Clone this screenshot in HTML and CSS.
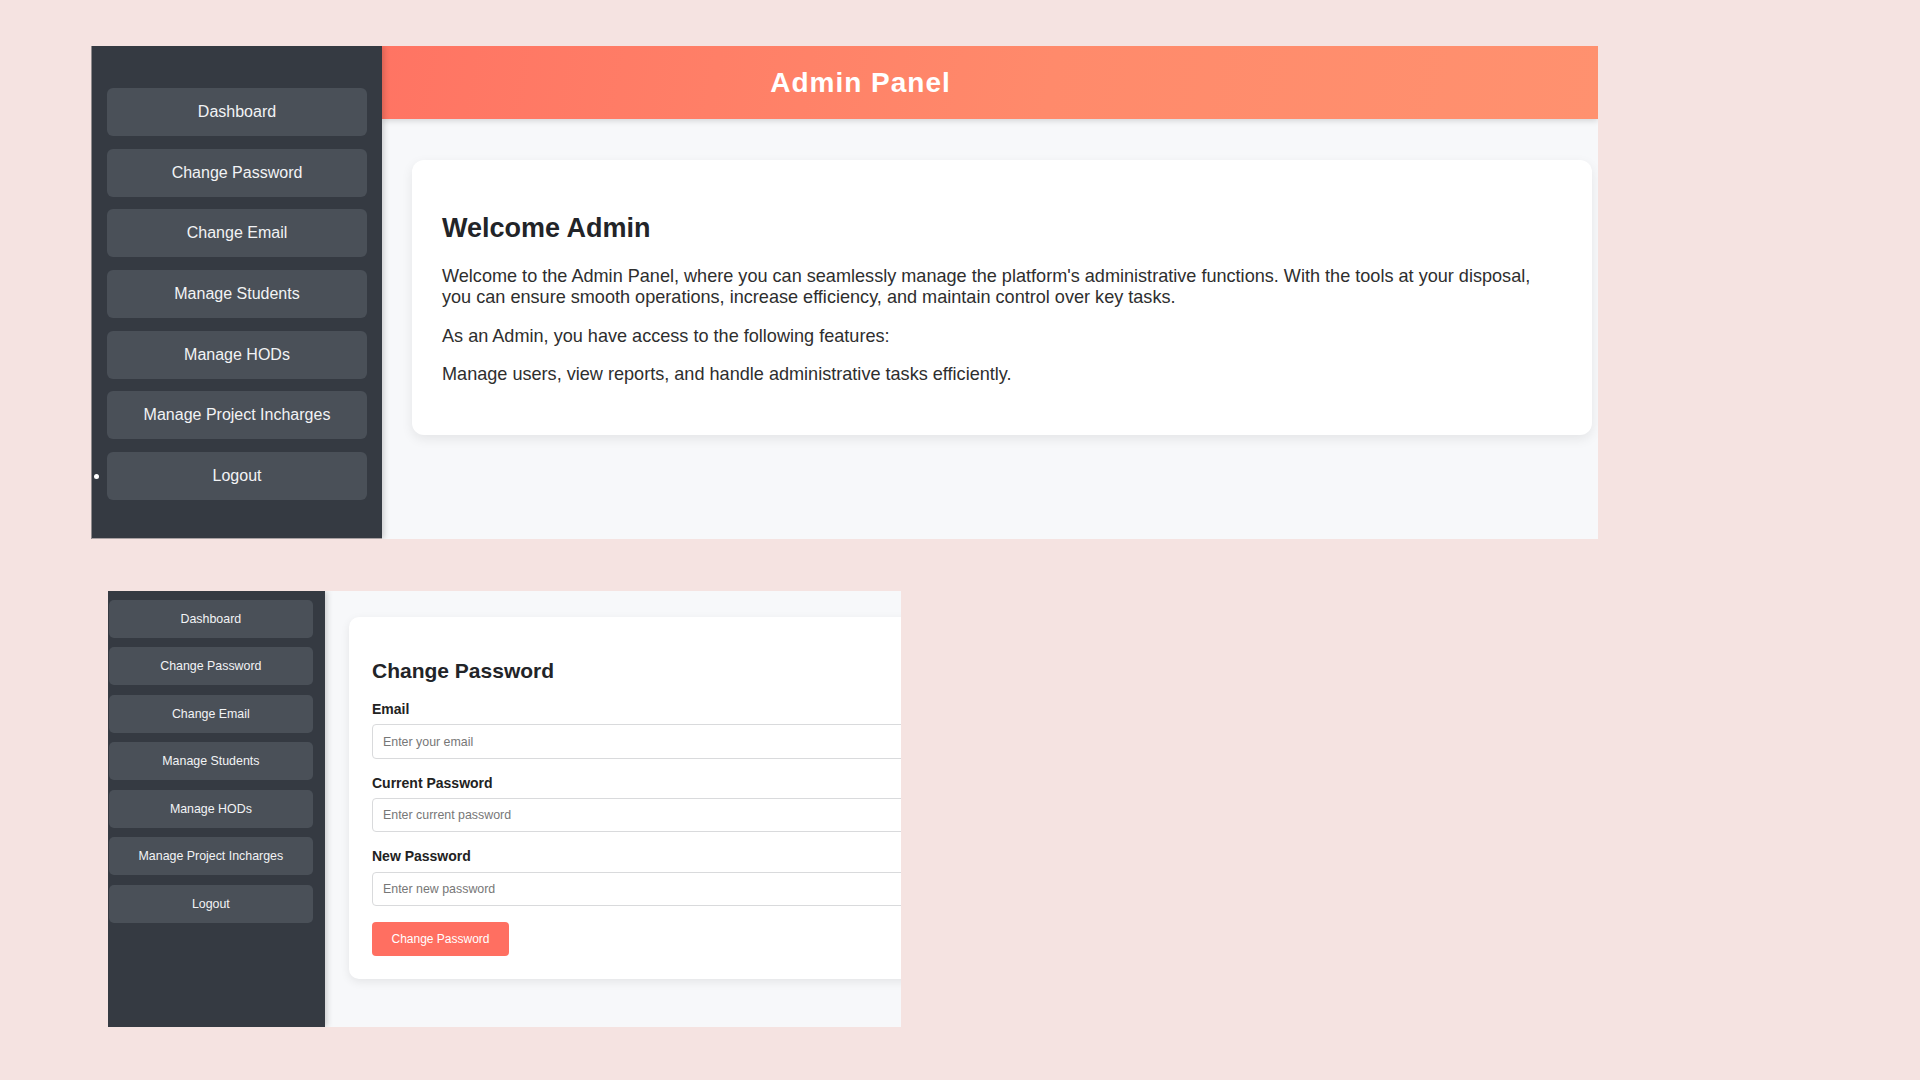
FILE: index.html
```html
<!DOCTYPE html>
<html lang="en">
<head>
<meta charset="utf-8">
<title>Admin Panel</title>
<link rel="stylesheet" href="styles.css">
</head>
<body>
<div class="page">
  <section class="shot shot-dashboard">
    <nav class="sidebar">
      <a class="nav-btn">Dashboard</a>
      <a class="nav-btn">Change Password</a>
      <a class="nav-btn">Change Email</a>
      <a class="nav-btn">Manage Students</a>
      <a class="nav-btn">Manage HODs</a>
      <a class="nav-btn">Manage Project Incharges</a>
      <a class="nav-btn nav-bullet">Logout</a>
    </nav>
    <div class="main">
      <header class="topbar"><h1>Admin Panel</h1></header>
      <div class="content">
        <div class="card">
          <h2>Welcome Admin</h2>
          <p>Welcome to the Admin Panel, where you can seamlessly manage the platform's administrative functions. With the tools at your disposal, you can ensure smooth operations, increase efficiency, and maintain control over key tasks.</p>
          <p>As an Admin, you have access to the following features:</p>
          <p>Manage users, view reports, and handle administrative tasks efficiently.</p>
        </div>
      </div>
    </div>
  </section>

  <section class="shot shot-password">
    <nav class="sidebar sidebar-sm">
      <a class="nav-btn">Dashboard</a>
      <a class="nav-btn">Change Password</a>
      <a class="nav-btn">Change Email</a>
      <a class="nav-btn">Manage Students</a>
      <a class="nav-btn">Manage HODs</a>
      <a class="nav-btn">Manage Project Incharges</a>
      <a class="nav-btn">Logout</a>
    </nav>
    <div class="main main-sm">
      <div class="form-card">
        <h2>Change Password</h2>
        <label class="field-label">Email</label>
        <input class="field-input" type="text" placeholder="Enter your email">
        <label class="field-label">Current Password</label>
        <input class="field-input" type="password" placeholder="Enter current password">
        <label class="field-label">New Password</label>
        <input class="field-input" type="password" placeholder="Enter new password">
        <button class="submit-btn">Change Password</button>
      </div>
    </div>
  </section>
</div>
</body>
</html>
```

FILE: styles.css
```css
* { box-sizing: border-box; }

html, body {
  margin: 0;
  padding: 0;
  background: #f5e3e1;
  font-family: "Liberation Sans", Arial, sans-serif;
  width: 1920px;
  height: 1080px;
  overflow: hidden;
}

.page {
  display: flex;
  flex-direction: column;
  align-items: flex-start;
  padding-top: 46px;
}

.shot {
  display: flex;
  overflow: hidden;
}

/* ---------- first screenshot ---------- */
.shot-dashboard {
  margin-left: 91px;
  width: 1507px;
  height: 493px;
  border-left: 1px solid #8f8a8c;
}

.sidebar {
  position: relative;
  z-index: 2;
  flex: 0 0 290px;
  background: #353a42;
  display: flex;
  flex-direction: column;
  gap: 12.7px;
  padding: 42px 15px 0 15px;
  box-shadow: 2px 0 6px rgba(0, 0, 0, 0.18);
  border-bottom: 1px solid #a9a1a3;
}

.nav-btn {
  display: flex;
  align-items: center;
  justify-content: center;
  height: 48px;
  flex: 0 0 auto;
  background: #4a5058;
  border-radius: 6px;
  color: #f2f3f5;
  font-size: 16px;
  text-decoration: none;
}

.nav-bullet { position: relative; }
.nav-bullet::before {
  content: "";
  position: absolute;
  left: -13px;
  top: 22px;
  width: 5px;
  height: 5px;
  border-radius: 50%;
  background: #ffffff;
}

.main {
  flex: 1;
  display: flex;
  flex-direction: column;
  background: #f7f8fa;
  min-width: 0;
}

.topbar {
  position: relative;
  z-index: 1;
  height: 73px;
  flex: 0 0 73px;
  display: flex;
  align-items: center;
  justify-content: center;
  padding-right: 259px;
  background: linear-gradient(100deg, #ff7463 0%, #ff8a6b 55%, #ff916f 100%);
  box-shadow: 0 2px 6px rgba(0, 0, 0, 0.14);
}

.topbar h1 {
  margin: 0;
  color: #ffffff;
  font-size: 28px;
  font-weight: 700;
  letter-spacing: 1px;
}

.content {
  padding: 41px 6px 0 30px;
}

.card {
  background: #ffffff;
  border-radius: 12px;
  padding: 30px 30px 31.5px;
  box-shadow: 0 4px 12px rgba(0, 0, 0, 0.08);
  color: #2e2e2e;
}

.card h2 {
  margin: 23px 0 22px;
  font-size: 27px;
  font-weight: 700;
  color: #222428;
}

.card p {
  margin: 18px 0;
  max-width: 1100px;
  font-size: 18.1px;
  line-height: 20.8px;
}

/* ---------- second screenshot ---------- */
.shot-password {
  margin-top: 52px;
  margin-left: 108px;
  width: 793px;
  height: 436px;
}

.sidebar-sm {
  flex: 0 0 217px;
  gap: 9.9px;
  padding: 9px 12.3px 0 1px;
  border-bottom: none;
}

.sidebar-sm .nav-btn {
  height: 37.6px;
  border-radius: 5px;
  font-size: 12.4px;
}

.main-sm {
  overflow: hidden;
  padding: 26px 0 0 24px;
  align-items: flex-start;
}

.form-card {
  width: 700px;
  flex: 0 0 auto;
  background: #ffffff;
  border-radius: 10px;
  padding: 23px 23px 23px;
  box-shadow: 0 3px 10px rgba(0, 0, 0, 0.08);
  display: flex;
  flex-direction: column;
  align-items: flex-start;
}

.form-card h2 {
  margin: 19px 0 18px;
  font-size: 21px;
  font-weight: 700;
  color: #222428;
}

.field-label {
  font-size: 14px;
  font-weight: 700;
  color: #222;
  line-height: 16px;
  margin-bottom: 7.3px;
}

.field-input {
  width: 100%;
  height: 34.5px;
  margin: 0 0 15.9px;
  padding: 0 10px;
  border: 1px solid #d9dadc;
  border-radius: 4px;
  font-family: "Liberation Sans", Arial, sans-serif;
  font-size: 12.4px;
  color: #333;
  background: #fff;
}

.field-input::placeholder { color: #777; }

.submit-btn {
  height: 34px;
  width: 137px;
  border: none;
  border-radius: 4px;
  background: #ff6f61;
  color: #ffffff;
  font-family: "Liberation Sans", Arial, sans-serif;
  font-size: 12px;
  padding: 0;
}
```
